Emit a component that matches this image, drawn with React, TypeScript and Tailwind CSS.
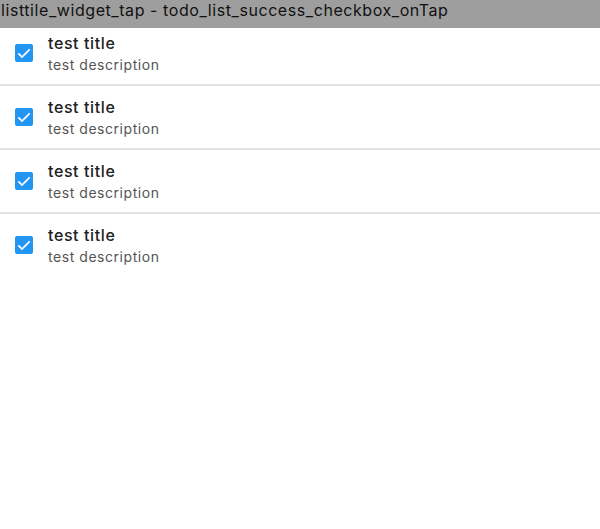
import { Fragment } from "react";

const items = [1, 2, 3, 4];

function Checkbox() {
  return (
    <div className="w-[18px] h-[18px] rounded-[2px] bg-[#2196f3] flex items-center justify-center shrink-0">
      <svg width="16" height="16" viewBox="0 0 24 24" fill="none">
        <path d="M3.5 12.5l5.5 5.5L20.5 6.5" stroke="white" strokeWidth="2.6" />
      </svg>
    </div>
  );
}

export default function App() {
  return (
    <div className="w-[600px] h-[529px] bg-white font-['Inter',sans-serif] overflow-hidden">
      <div className="h-[28px] bg-[#9e9e9e] text-[16px] leading-[20px] text-[#111] pl-[1px] tracking-[0.57px]">
        listtile_widget_tap - todo_list_success_checkbox_onTap
      </div>
      {items.map((i) => (
        <Fragment key={i}>
          <div className={`flex items-center pl-[15px] ${i === 1 ? "h-[56px] pb-[6px]" : "h-[62px]"}`}>
            <Checkbox />
            <div className="ml-[15px] flex flex-col pt-[1px]">
              <span className="text-[16px] leading-[22px] text-[#222] font-medium tracking-[0.6px]">test title</span>
              <span className="text-[14px] leading-[22px] text-[#555] tracking-[0.55px]">test description</span>
            </div>
          </div>
          {i < 4 && <div className="h-[2px] bg-[#e3e3e3]" />}
        </Fragment>
      ))}
    </div>
  );
}
